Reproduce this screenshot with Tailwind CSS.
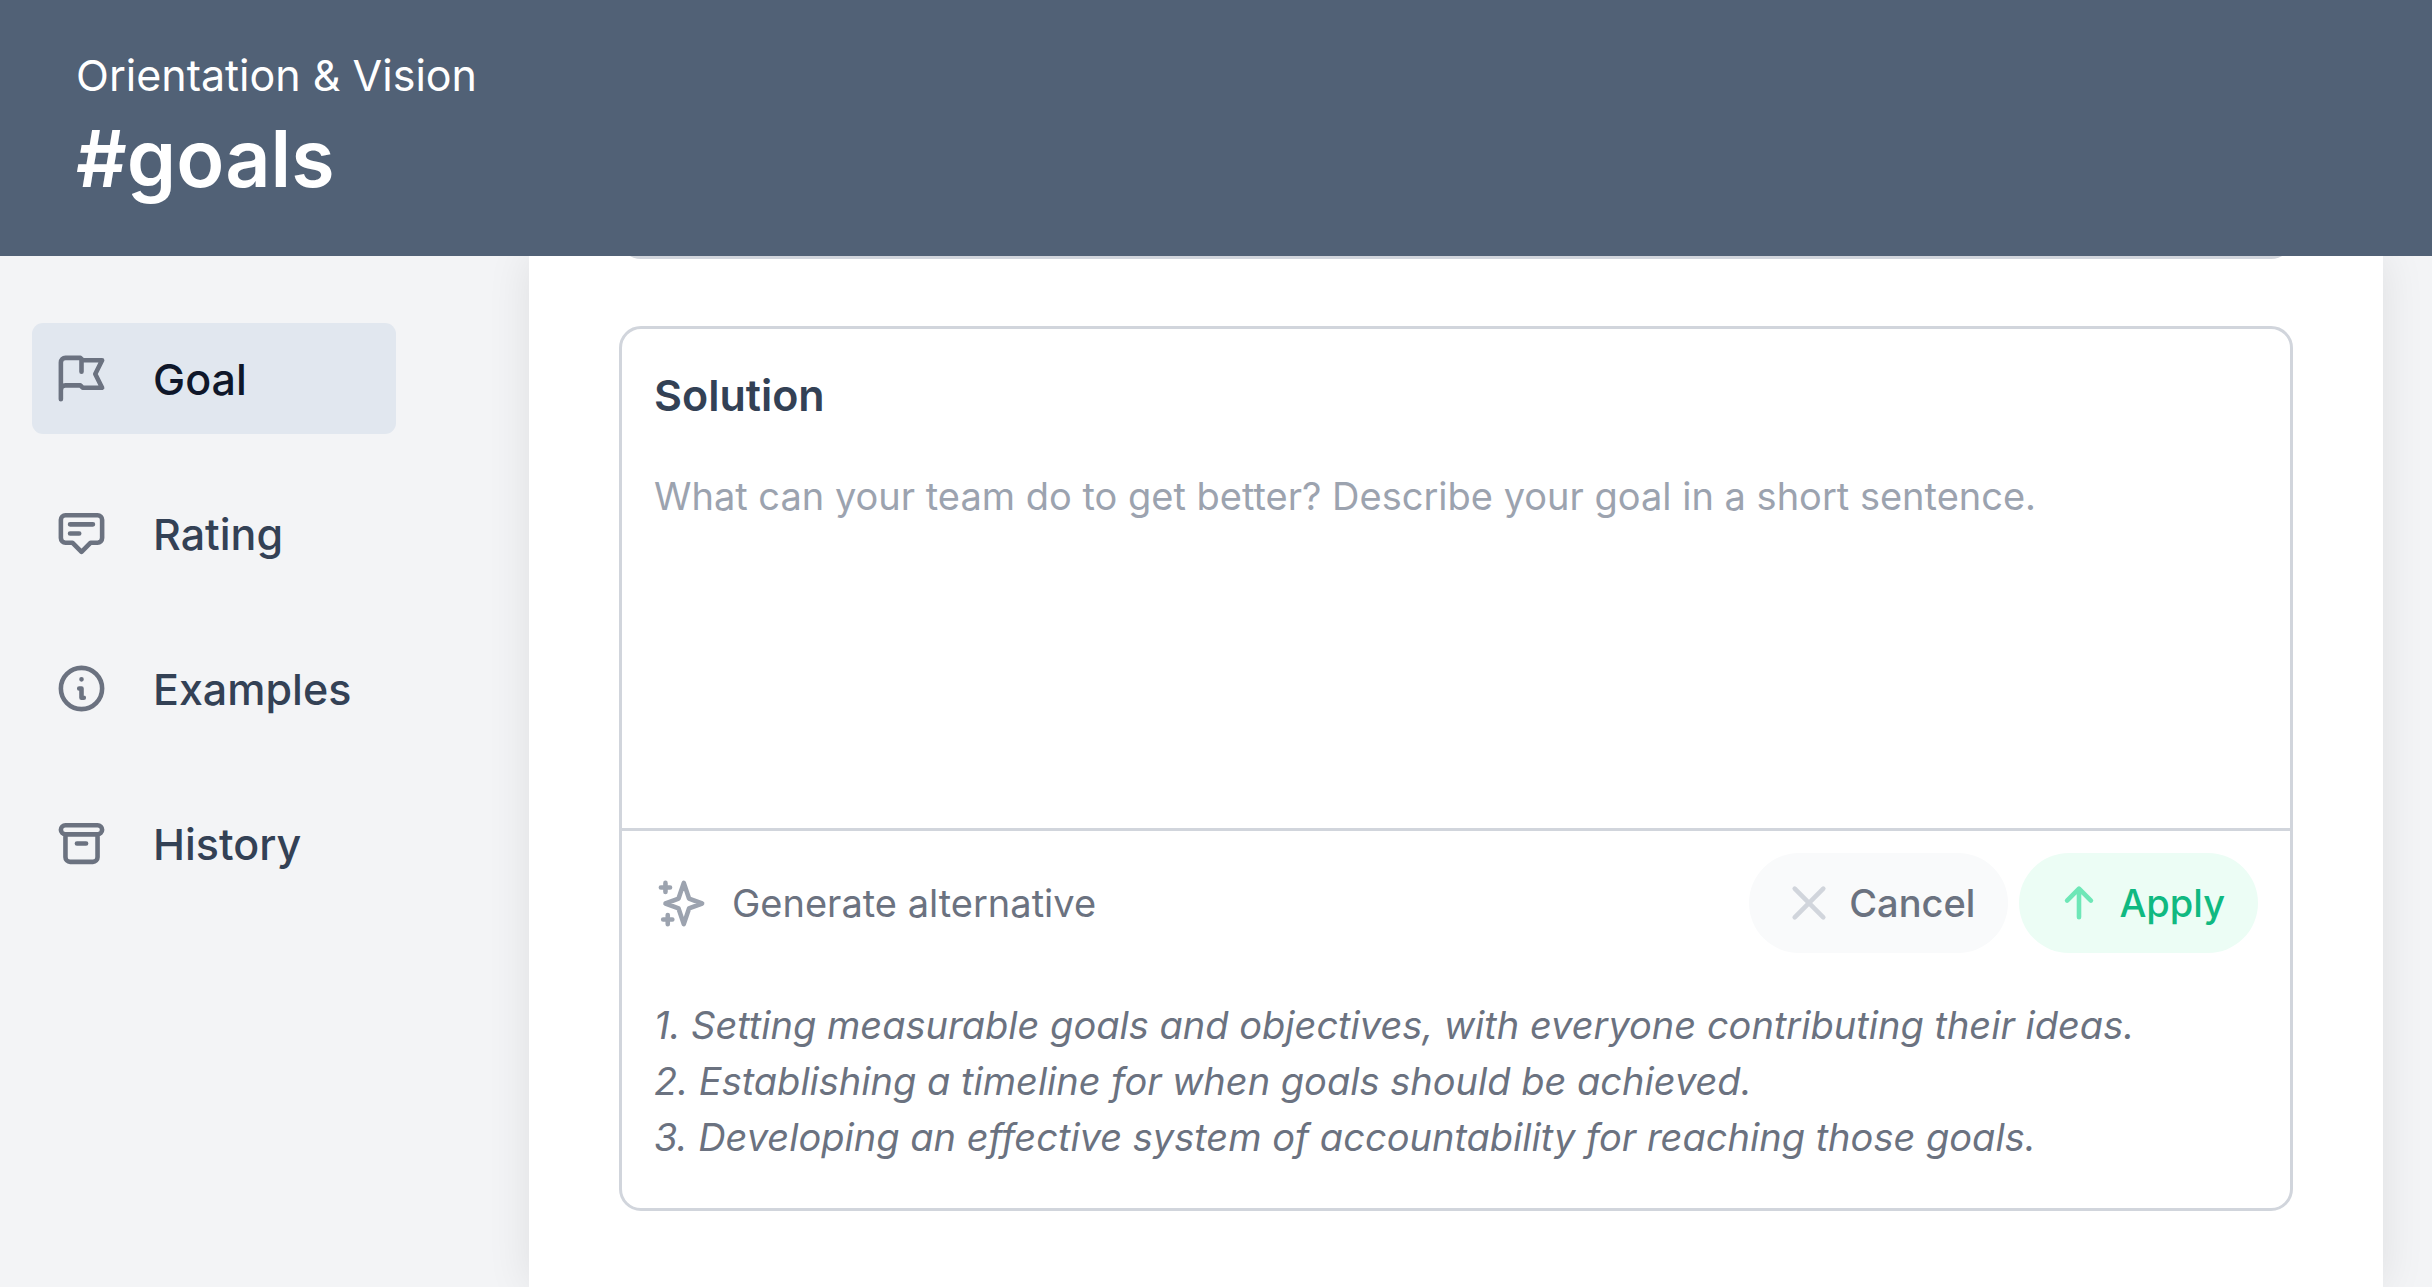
<!DOCTYPE html>
<html lang="en">

<head>
    <meta charset="UTF-8" />
    <meta name="viewport" content="width=device-width, initial-scale=1" />
    <title>#goals</title>
    <script src="https://cdn.jsdelivr.net/npm/@tailwindcss/browser@4"></script>
</head>

<body class="bg-gray-100 font-['Inter',sans-serif] text-[38px] leading-[56px] text-[#6b7280]">

    <div class="flex h-screen flex-col overflow-hidden">
        <header class="relative z-10 shrink-0 bg-[#516176] px-[76px] pt-[42px] pb-[48px] text-white">
            <p class="text-[43px] leading-[66px]">Orientation &amp; Vision</p>
            <h1 class="text-[79px] leading-[100px] font-semibold">#goals</h1>
        </header>

        <div class="flex min-h-0 flex-1">
            <nav class="flex w-[529px] shrink-0 flex-col gap-[44px] pt-[67px] pr-[133px] pl-[32px] text-[43px] font-medium text-[#334155]">
                <a href="#goal" aria-current="page" class="flex h-[111px] items-center gap-[44px] rounded-[11px] bg-[#e1e7ef] pl-[22px] text-[#0f172a]">
                    <svg class="size-[55px] text-[#6b7280]" fill="none" stroke="currentColor" stroke-width="2" stroke-linecap="round" stroke-linejoin="round" viewBox="0 0 24 24"><path d="M3 21v-4m0 0V5a2 2 0 012-2h6.5l1 1H21l-3 6 3 6h-8.5l-1-1H5a2 2 0 00-2 2zm9-13.5V9" /></svg>
                    Goal
                </a>
                <a href="#rating" class="flex h-[111px] items-center gap-[44px] rounded-[11px] pl-[22px]">
                    <svg class="size-[55px] text-[#6b7280]" fill="none" stroke="currentColor" stroke-width="2" stroke-linecap="round" stroke-linejoin="round" viewBox="0 0 24 24"><path d="M7 8h10M7 12h4m1 8l-4-4H5a2 2 0 01-2-2V6a2 2 0 012-2h14a2 2 0 012 2v8a2 2 0 01-2 2h-3l-4 4z" /></svg>
                    Rating
                </a>
                <a href="#examples" class="flex h-[111px] items-center gap-[44px] rounded-[11px] pl-[22px]">
                    <svg class="size-[55px] text-[#6b7280]" fill="none" stroke="currentColor" stroke-width="2" stroke-linecap="round" stroke-linejoin="round" viewBox="0 0 24 24"><path d="M13 16h-1v-4h-1m1-4h.01M21 12a9 9 0 11-18 0 9 9 0 0118 0z" /></svg>
                    Examples
                </a>
                <a href="#history" class="flex h-[111px] items-center gap-[44px] rounded-[11px] pl-[22px]">
                    <svg class="size-[55px] text-[#6b7280]" fill="none" stroke="currentColor" stroke-width="2" stroke-linecap="round" stroke-linejoin="round" viewBox="0 0 24 24"><path d="M5 8h14M5 8a2 2 0 110-4h14a2 2 0 110 4M5 8v10a2 2 0 002 2h10a2 2 0 002-2V8m-9 4h4" /></svg>
                    History
                </a>
            </nav>

            <main class="mr-[49px] flex min-w-0 flex-1 flex-col bg-white px-[90px] shadow-[0_0_42px_rgba(0,0,0,0.09)]">
                <!-- tail of the previous card, scrolled under the header -->
                <div class="-mt-[41px] h-[44px] shrink-0 rounded-b-[22px] border-3 border-gray-300"></div>

                <form class="mt-[67px] overflow-hidden rounded-[22px] border-3 border-gray-300">
                    <div class="flex flex-col px-[32px] pt-[33px]">
                        <label for="solution" class="text-[43px] leading-[66px] font-semibold text-[#334155]">Solution</label>
                        <textarea id="solution" placeholder="What can your team do to get better? Describe your goal in a short sentence." class="mt-[40px] block h-[360px] w-full resize-none outline-none placeholder:text-[#9ca3af]"></textarea>
                    </div>

                    <div class="flex flex-col gap-[44px] border-t-3 border-gray-300 px-[32px] pt-[22px] pb-[43px]">
                        <div class="flex items-center gap-[11px]">
                            <button type="button" class="mr-auto flex items-center gap-[23px]">
                                <svg class="size-[55px] text-[#9ca3af]" fill="none" stroke="currentColor" stroke-width="2" stroke-linecap="round" stroke-linejoin="round" viewBox="0 0 24 24"><path d="M5 3v4M3 5h4M6 17v4m-2-2h4m5-16l2.286 6.857L21 12l-5.714 2.143L13 21l-2.286-6.857L5 12l5.714-2.143L13 3z" /></svg>
                                Generate alternative
                            </button>
                            <button type="button" class="flex h-[100px] items-center gap-[18px] rounded-full bg-[#f9fafb] pr-[33px] pl-[38px] font-medium">
                                <svg class="size-[44px] text-gray-300" fill="none" stroke="currentColor" stroke-width="2.5" stroke-linecap="round" viewBox="0 0 24 24"><path d="M4.2 4.2l15.6 15.6M19.8 4.2L4.2 19.8" /></svg>
                                Cancel
                            </button>
                            <button type="submit" class="flex h-[100px] items-center gap-[18px] rounded-full bg-[#ecfdf5] pr-[33px] pl-[38px] font-medium text-[#10b981]">
                                <svg class="size-[44px] text-[#6ee7b7]" fill="none" stroke="currentColor" stroke-width="2.5" stroke-linecap="round" stroke-linejoin="round" viewBox="0 0 24 24"><path d="M12 19.8V4.2M5.5 10.7L12 4.2l6.500 6.500" /></svg>
                                Apply
                            </button>
                        </div>

                        <div class="italic">
                            <p>1. Setting measurable goals and objectives, with everyone contributing their ideas.</p>
                            <p>2. Establishing a timeline for when goals should be achieved.</p>
                            <p>3. Developing an effective system of accountability for reaching those goals.</p>
                        </div>
                    </div>
                </form>
            </main>
        </div>
    </div>

</body>

</html>
